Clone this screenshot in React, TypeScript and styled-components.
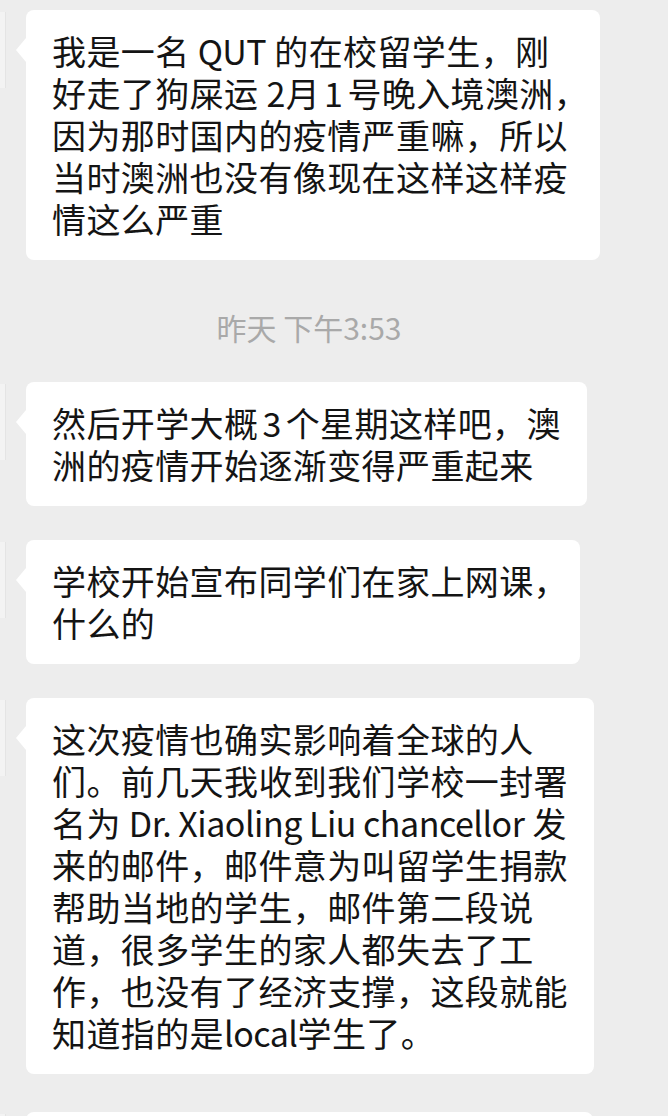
import React from "react";
import styled, { createGlobalStyle } from "styled-components";

const Global = createGlobalStyle`
  html, body {
    margin: 0;
    padding: 0;
    background: #ededed;
  }
  body {
    font-family: "Noto Sans CJK SC", "Noto Sans", sans-serif;
  }
`;

const Page = styled.div`
  display: flex;
  flex-direction: column;
  padding-top: 10px;
  width: 668px;
  height: 1116px;
  overflow: hidden;
  box-sizing: border-box;
`;

const Row = styled.div<{ $gap?: number }>`
  display: flex;
  align-items: flex-start;
  margin-bottom: ${(p) => p.$gap ?? 34}px;
`;

const Avatar = styled.div`
  width: 6px;
  height: 76px;
  margin-top: 2px;
  background: #f3f3f3;
  border-right: 1px solid #e4e4e4;
  box-sizing: border-box;
  flex: none;
`;

const Bubble = styled.div<{ $width?: number }>`
  position: relative;
  margin-left: 20px;
  background: #ffffff;
  border-radius: 8px;
  padding: 20px 26px 20px 26px;
  color: #141414;
  font-size: 34px;
  line-height: 42px;
  letter-spacing: 0.4px;
  ${(p) => (p.$width ? `width: ${p.$width}px; box-sizing: border-box;` : "")}
  &::before {
    content: "";
    position: absolute;
    left: -10px;
    top: 28px;
    border-top: 12px solid transparent;
    border-bottom: 12px solid transparent;
    border-right: 10px solid #ffffff;
  }
`;

const Line = styled.span`
  display: block;
  white-space: nowrap;
`;

const Latin = styled.span`
  letter-spacing: -0.5px;
`;

const Digit = styled.span<{ $space: number }>`
  display: inline-block;
  padding: 0 ${(p) => p.$space}px;
`;

const Squeeze = styled.span`
  margin-right: -14px;
`;

const Stamp = styled.div`
  display: flex;
  justify-content: center;
  padding-right: 50px;
  margin: 47px 0 35px;
  color: #a9a9a9;
  font-size: 30px;
  line-height: 40px;
`;

const first: string[] = [
  "我是一名 QUT 的在校留学生，刚",
  "好走了狗屎运 2月#1#号晚入境澳洲，",
  "因为那时国内的疫情严重嘛，所以",
  "当时澳洲也没有像现在这样这样疫",
  "情这么严重",
];

const after: { lines: string[]; width?: number }[] = [
  { lines: ["然后开学大概#3#个星期这样吧，澳", "洲的疫情开始逐渐变得严重起来"] },
  { lines: ["学校开始宣布同学们在家上网课，", "什么的"] },
  {
    lines: [
      "这次疫情也确实影响着全球的人",
      "们。前几天我收到我们学校一封署",
      "名为 Dr. Xiaoling Liu chancellor 发",
      "来的邮件，邮件意为叫留学生捐款",
      "帮助当地的学生，邮件第二段说",
      "道，很多学生的家人都失去了工",
      "作，也没有了经济支撑，这段就能",
      "知道指的是local学生了。",
    ],
  },
  { lines: ["\u00a0"], width: 567 },
];

const renderLine = (text: string) => {
  let tail: string | null = null;
  let body = text;
  if (body.endsWith("，")) {
    tail = "，";
    body = body.slice(0, -1);
  }
  const parts = body.split(/(#\d+#|[A-Za-z][A-Za-z. ]*[A-Za-z.]|[A-Za-z])/);
  return (
    <>
      {parts.map((p, i) => {
        if (i % 2 === 0) return <React.Fragment key={i}>{p}</React.Fragment>;
        if (p.startsWith("#")) return <Digit key={i} $space={4}>{p.slice(1, -1)}</Digit>;
        return <Latin key={i}>{p}</Latin>;
      })}
      {tail && <Squeeze>{tail}</Squeeze>}
    </>
  );
};

const Message = ({ lines, gap, width }: { lines: string[]; gap?: number; width?: number }) => (
  <Row $gap={gap}>
    <Avatar />
    <Bubble $width={width}>
      {lines.map((l, i) => (
        <Line key={i}>{renderLine(l)}</Line>
      ))}
    </Bubble>
  </Row>
);

export default function App() {
  return (
    <>
      <Global />
      <Page>
        <Message lines={first} gap={0} />
        <Stamp>昨天 下午3:53</Stamp>
        {after.map((m, i) => (
          <Message key={i} lines={m.lines} width={m.width} gap={i === 2 ? 38 : 34} />
        ))}
      </Page>
    </>
  );
}
